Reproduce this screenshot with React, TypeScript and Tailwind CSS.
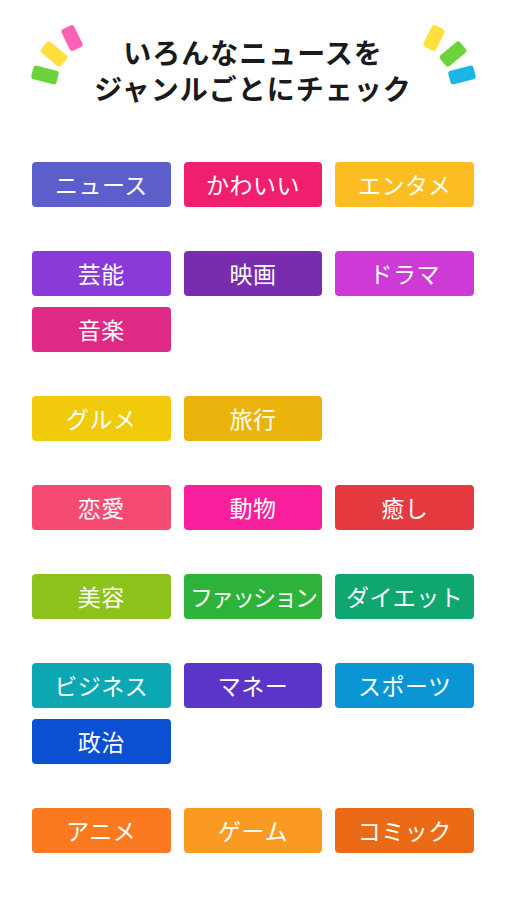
import React from "react";

type Genre = { name: string; color: string; tight?: boolean };

// genres grouped the way they sit on the screen
const groups: Genre[][] = [
  [
    { name: "ニュース", color: "bg-[#5b5ecb]" },
    { name: "かわいい", color: "bg-[#ef1f6d]" },
    { name: "エンタメ", color: "bg-[#fcbd22]" },
  ],
  [
    { name: "芸能", color: "bg-[#8a3ad8]" },
    { name: "映画", color: "bg-[#7a2cae]" },
    { name: "ドラマ", color: "bg-[#cd3ad6]" },
    { name: "音楽", color: "bg-[#de2a84]" },
  ],
  [
    { name: "グルメ", color: "bg-[#f1ca0c]" },
    { name: "旅行", color: "bg-[#ebb40c]" },
  ],
  [
    { name: "恋愛", color: "bg-[#f54b73]" },
    { name: "動物", color: "bg-[#f81e9c]" },
    { name: "癒し", color: "bg-[#e3393f]" },
  ],
  [
    { name: "美容", color: "bg-[#8cc21c]" },
    { name: "ファッション", color: "bg-[#2db23a]", tight: true },
    { name: "ダイエット", color: "bg-[#0fa66f]" },
  ],
  [
    { name: "ビジネス", color: "bg-[#0ba8b3]" },
    { name: "マネー", color: "bg-[#5b34c8]" },
    { name: "スポーツ", color: "bg-[#0a95d5]" },
    { name: "政治", color: "bg-[#0b4fd2]" },
  ],
  [
    { name: "アニメ", color: "bg-[#fb791f]" },
    { name: "ゲーム", color: "bg-[#fb9a22]" },
    { name: "コミック", color: "bg-[#eb6a16]" },
  ],
];

const Sparks = ({ side }: { side: "left" | "right" }) => {
  const bars =
    side === "left"
      ? [
          { x: 47, y: 23, w: 14, h: 24, r: -26, c: "#ff62b4" },
          { x: 29, y: 39, w: 26, h: 14, r: 40, c: "#ffdf3c" },
          { x: 20, y: 60, w: 26, h: 14, r: 15, c: "#6dd33c" },
        ]
      : [
          { x: 15, y: 23, w: 14, h: 24, r: 26, c: "#ffdf3c" },
          { x: 34, y: 39, w: 26, h: 14, r: -40, c: "#6dd33c" },
          { x: 43, y: 60, w: 26, h: 14, r: -15, c: "#1cb5ea" },
        ];
  return (
    <svg width="62" height="80" viewBox="0 0 62 80" className="shrink-0">
      {bars.map((b, i) => (
        <rect
          key={i}
          x={b.x - b.w / 2}
          y={b.y - b.h / 2}
          width={b.w}
          height={b.h}
          rx="3"
          fill={b.c}
          transform={`rotate(${b.r} ${b.x} ${b.y})`}
        />
      ))}
    </svg>
  );
};

const App = () => {
  return (
    <div
      className="w-[506px] min-h-[900px] bg-white"
      style={{ fontFamily: '"Noto Sans CJK JP", "Noto Sans", sans-serif' }}
    >
      <header className="flex items-start justify-between px-[25px] pt-[15px]">
        <Sparks side="left" />
        <h1 className="flex-1 mt-[19px] text-center whitespace-nowrap text-[28px] leading-[36px] font-bold tracking-[1px] text-[#1a1a1a]">
          <span className="block">いろんなニュースを</span>
          <span className="block">ジャンルごとにチェック</span>
        </h1>
        <Sparks side="right" />
      </header>

      <main className="flex flex-col gap-[44px] px-[32px] mt-[56px] pb-10">
        {groups.map((group, gi) => (
          <div key={gi} className="grid grid-cols-3 gap-x-[13px] gap-y-[11px]">
            {group.map((g) => (
              <button
                key={g.name}
                className={`h-[45px] rounded-[4px] flex items-center justify-center text-white text-[23px] font-normal ${g.color} ${
                  g.tight ? "tracking-[-2px]" : "tracking-[0.5px]"
                }`}
              >
                {g.name}
              </button>
            ))}
          </div>
        ))}
      </main>
    </div>
  );
};

export default App;
